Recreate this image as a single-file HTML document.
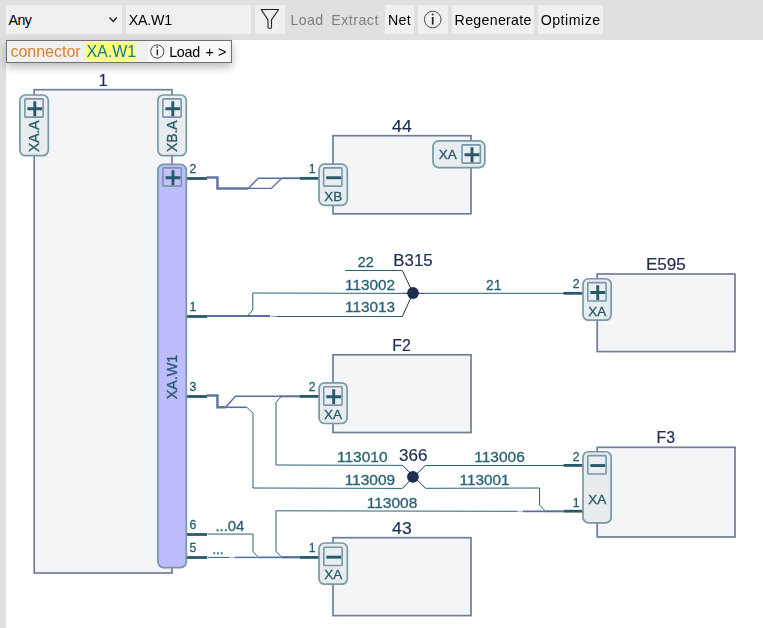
<!DOCTYPE html>
<html><head><meta charset="utf-8"><title>XA.W1</title>
<style>
html,body{margin:0;padding:0;}
body{width:763px;height:628px;overflow:hidden;background:#fff;font-family:"Liberation Sans",sans-serif;position:relative;}
#bar{position:absolute;left:0;top:0;width:763px;height:39.5px;background:#e0e0e0;}
#strip{position:absolute;left:0;top:0;width:5.8px;height:628px;background:#e0e0e0;}
.b{position:absolute;top:5px;height:29px;background:#f0f0f0;font-size:14.2px;line-height:30.4px;color:#000;white-space:nowrap;box-sizing:border-box;}
.d{background:transparent;color:#808080;}
#tip{position:absolute;left:6px;top:40px;width:226px;height:23px;box-sizing:border-box;border:1px solid #707070;background:#f0f0f0;box-shadow:0 4px 10px rgba(0,0,0,0.28);font-size:16px;line-height:21px;white-space:nowrap;}
#tip span{position:absolute;top:0;height:21px;}
svg{position:absolute;left:0;top:0;}
svg text{font-family:"Liberation Sans",sans-serif;}
</style></head><body>
<div id="bar"></div><div id="strip"></div>
<svg id="dg" width="763" height="628" viewBox="0 0 763 628" style="will-change:transform">
<rect x="34.2" y="89.7" width="137.80" height="483.30" fill="#f4f5f7" stroke="#707e96" stroke-width="1.7"/>
<text x="103.2" y="86" font-size="16.6" fill="#1e2d50" stroke="#1e2d50" stroke-width="0.2" text-anchor="middle">1</text>
<rect x="333" y="135.7" width="138.00" height="78.10" fill="#f4f5f7" stroke="#707e96" stroke-width="1.7"/>
<text x="401.9" y="131.9" font-size="16.6" fill="#1e2d50" stroke="#1e2d50" stroke-width="0.2" text-anchor="middle" textLength="19.6" lengthAdjust="spacingAndGlyphs">44</text>
<rect x="597.2" y="274" width="137.80" height="77.60" fill="#f4f5f7" stroke="#707e96" stroke-width="1.7"/>
<text x="665.9" y="270" font-size="16.6" fill="#1e2d50" stroke="#1e2d50" stroke-width="0.2" text-anchor="middle" textLength="40" lengthAdjust="spacingAndGlyphs">E595</text>
<rect x="333" y="354.8" width="138.00" height="77.70" fill="#f4f5f7" stroke="#707e96" stroke-width="1.7"/>
<text x="401.5" y="350.8" font-size="16.6" fill="#1e2d50" stroke="#1e2d50" stroke-width="0.2" text-anchor="middle" textLength="18.5" lengthAdjust="spacingAndGlyphs">F2</text>
<rect x="597.2" y="447.3" width="137.80" height="89.70" fill="#f4f5f7" stroke="#707e96" stroke-width="1.7"/>
<text x="665.8" y="443.3" font-size="16.6" fill="#1e2d50" stroke="#1e2d50" stroke-width="0.2" text-anchor="middle" textLength="18.5" lengthAdjust="spacingAndGlyphs">F3</text>
<rect x="333" y="537.7" width="138.00" height="77.90" fill="#f4f5f7" stroke="#707e96" stroke-width="1.7"/>
<text x="401.9" y="533.7" font-size="16.6" fill="#1e2d50" stroke="#1e2d50" stroke-width="0.2" text-anchor="middle" textLength="19.6" lengthAdjust="spacingAndGlyphs">43</text>
<path d="M206.5 177.5H217.45V188.4H248.3" stroke="#6177a6" stroke-width="2.5" fill="none" stroke-linejoin="miter"/>
<path d="M248.3 188.4L258.3 178.2H281.6" stroke="#586fa1" stroke-width="1.4" fill="none" stroke-linejoin="miter"/>
<path d="M248.3 188.4H271.4L281.6 178.2" stroke="#586fa1" stroke-width="1.4" fill="none" stroke-linejoin="miter"/>
<path d="M281.6 178.2H299.5" stroke="#586fa1" stroke-width="1.9" fill="none" stroke-linejoin="miter"/>
<path d="M206.7 316.05H270" stroke="#586fa1" stroke-width="2.1" fill="none" stroke-linejoin="miter"/>
<path d="M271 316.5H276.5" stroke="#7d90b8" stroke-width="0.8" fill="none" stroke-linejoin="miter"/>
<path d="M276.5 316.5H402.3" stroke="#2a6173" stroke-width="1" fill="none" stroke-linejoin="miter"/>
<path d="M247.6 316L252.8 310V293L402.3 293.4" stroke="#2a6173" stroke-width="1" fill="none" stroke-linejoin="miter"/>
<path d="M345.2 270.5H402.3" stroke="#2a6173" stroke-width="1" fill="none" stroke-linejoin="miter"/>
<path d="M425.4 293.3H564" stroke="#2a6173" stroke-width="1" fill="none" stroke-linejoin="miter"/>
<path d="M402.3 270.5L413 293L402.3 316.5M402.3 293.3H425.4" stroke="#1e2d50" stroke-width="1" fill="none" stroke-linejoin="miter"/>
<circle cx="413" cy="293" r="5.9" fill="#1e2d50"/>
<path d="M206.5 395.5H217.45V407.2H225.6" stroke="#6177a6" stroke-width="2.5" fill="none" stroke-linejoin="miter"/>
<path d="M225.6 407.2L235.4 396.2H280" stroke="#586fa1" stroke-width="1.4" fill="none" stroke-linejoin="miter"/>
<path d="M280 396.3H299.5" stroke="#586fa1" stroke-width="2" fill="none" stroke-linejoin="miter"/>
<path d="M225.6 407.3H246.8" stroke="#586fa1" stroke-width="1.6" fill="none" stroke-linejoin="miter"/>
<path d="M246.8 407.3L253 413.2V488L402.4 488.4" stroke="#2a6173" stroke-width="1" fill="none" stroke-linejoin="miter"/>
<path d="M281.2 396.4L276 402.4V465L402.4 465.4" stroke="#2a6173" stroke-width="1" fill="none" stroke-linejoin="miter"/>
<path d="M402.4 465.2L425.5 488.3M402.4 488.3L425.5 465.2" stroke="#1e2d50" stroke-width="1" fill="none" stroke-linejoin="miter"/>
<circle cx="412.9" cy="476.8" r="5.9" fill="#1e2d50"/>
<path d="M425.5 465.5H563.5" stroke="#2a6173" stroke-width="1" fill="none" stroke-linejoin="miter"/>
<path d="M425.5 488.3L539.6 488V505.2L545.2 510.8" stroke="#2a6173" stroke-width="1" fill="none" stroke-linejoin="miter"/>
<path d="M281.2 556.5L276 551.5V510.8L517.5 511.3" stroke="#2a6173" stroke-width="1" fill="none" stroke-linejoin="miter"/>
<path d="M522.7 511.35H545.2" stroke="#586fa1" stroke-width="1.7" fill="none" stroke-linejoin="miter"/>
<path d="M545.2 511.3H563.5" stroke="#586fa1" stroke-width="2.0" fill="none" stroke-linejoin="miter"/>
<path d="M517.5 511.3H522.7" stroke="#9aa9c6" stroke-width="0.8" fill="none" stroke-linejoin="miter"/>
<path d="M207.5 534.05H253V551.5L257.6 556.5" stroke="#2a6173" stroke-width="1" fill="none" stroke-linejoin="miter"/>
<path d="M207.5 557.4H229" stroke="#2a6173" stroke-width="1" fill="none" stroke-linejoin="miter"/>
<path d="M235 557.4H257.6" stroke="#586fa1" stroke-width="1.5" fill="none" stroke-linejoin="miter"/>
<path d="M257.6 557.35H281.2" stroke="#586fa1" stroke-width="1.7" fill="none" stroke-linejoin="miter"/>
<path d="M281.2 557.25H299.5" stroke="#586fa1" stroke-width="2.3" fill="none" stroke-linejoin="miter"/>
<path d="M229 557.4H235" stroke="#9aa9c6" stroke-width="0.8" fill="none" stroke-linejoin="miter"/>
<path d="M186.5 178.5H207" stroke="#265a6b" stroke-width="2.8" fill="none"/>
<path d="M186.5 316.5H207" stroke="#265a6b" stroke-width="2.8" fill="none"/>
<path d="M186.5 396.5H207" stroke="#265a6b" stroke-width="2.8" fill="none"/>
<path d="M186.5 534.5H207" stroke="#265a6b" stroke-width="2.8" fill="none"/>
<path d="M186.5 557.5H207" stroke="#265a6b" stroke-width="2.8" fill="none"/>
<path d="M299.5 178.35H318.8" stroke="#265a6b" stroke-width="2.8" fill="none"/>
<path d="M563.5 293.3H582.5" stroke="#265a6b" stroke-width="2.8" fill="none"/>
<path d="M299.5 396.4H318.8" stroke="#265a6b" stroke-width="2.8" fill="none"/>
<path d="M563.5 465.4H582.8" stroke="#265a6b" stroke-width="2.8" fill="none"/>
<path d="M563.5 511.2H582.8" stroke="#265a6b" stroke-width="2.8" fill="none"/>
<path d="M299.5 557.4H319" stroke="#265a6b" stroke-width="2.8" fill="none"/>
<rect x="19.9" y="95.0" width="28.40" height="60.70" rx="5.6" fill="#e8ecef" stroke="#7698a7" stroke-width="1.7"/>
<rect x="24.85" y="98.85" width="18.30" height="18.30" rx="0.8" fill="#ebeef1" stroke="#7698a7" stroke-width="1.6"/>
<path d="M27.40 108.75H42.20M34.80 101.35V116.15" stroke="#265a6b" stroke-width="2.9" fill="none"/>
<rect x="157.9" y="95.0" width="28.40" height="60.70" rx="5.6" fill="#e8ecef" stroke="#7698a7" stroke-width="1.7"/>
<rect x="162.85" y="98.85" width="18.30" height="18.30" rx="0.8" fill="#ebeef1" stroke="#7698a7" stroke-width="1.6"/>
<path d="M165.40 108.75H180.20M172.80 101.35V116.15" stroke="#265a6b" stroke-width="2.9" fill="none"/>
<rect x="157.9" y="164.4" width="28.40" height="403.20" rx="5.6" fill="#bcbcff" stroke="#7698a7" stroke-width="1.7"/>
<rect x="163.05" y="167.85" width="18.30" height="18.30" rx="0.8" fill="#c2c1fd" stroke="#7698a7" stroke-width="1.6"/>
<path d="M165.60 177.75H180.40M173.00 170.35V185.15" stroke="#265a6b" stroke-width="2.9" fill="none"/>
<rect x="319.0" y="164.1" width="28.30" height="41.20" rx="5.6" fill="#e8ecef" stroke="#7698a7" stroke-width="1.7"/>
<rect x="323.65" y="167.85" width="18.30" height="18.30" rx="0.8" fill="#ebeef1" stroke="#7698a7" stroke-width="1.6"/>
<path d="M326.20 177.75H341.00" stroke="#265a6b" stroke-width="2.9" fill="none"/>
<rect x="433.0" y="140.9" width="51.80" height="26.70" rx="5.6" fill="#e8ecef" stroke="#7698a7" stroke-width="1.7"/>
<rect x="462.05" y="144.85" width="18.30" height="18.30" rx="0.8" fill="#ebeef1" stroke="#7698a7" stroke-width="1.6"/>
<path d="M464.60 154.75H479.40M472.00 147.35V162.15" stroke="#265a6b" stroke-width="2.9" fill="none"/>
<rect x="582.95" y="278.75" width="28.20" height="41.45" rx="5.6" fill="#e8ecef" stroke="#7698a7" stroke-width="1.7"/>
<rect x="587.80" y="282.65" width="18.30" height="18.30" rx="0.8" fill="#ebeef1" stroke="#7698a7" stroke-width="1.6"/>
<path d="M590.35 292.55H605.15M597.75 285.15V299.95" stroke="#265a6b" stroke-width="2.9" fill="none"/>
<rect x="319.1" y="382.8" width="28.00" height="40.70" rx="5.6" fill="#e8ecef" stroke="#7698a7" stroke-width="1.7"/>
<rect x="323.75" y="386.80" width="18.30" height="18.30" rx="0.8" fill="#ebeef1" stroke="#7698a7" stroke-width="1.6"/>
<path d="M326.30 396.70H341.10M333.70 389.30V404.10" stroke="#265a6b" stroke-width="2.9" fill="none"/>
<rect x="582.95" y="451.75" width="28.20" height="71.05" rx="5.6" fill="#e8ecef" stroke="#7698a7" stroke-width="1.7"/>
<rect x="587.80" y="455.65" width="18.30" height="18.30" rx="0.8" fill="#ebeef1" stroke="#7698a7" stroke-width="1.6"/>
<path d="M590.35 465.55H605.15" stroke="#265a6b" stroke-width="2.9" fill="none"/>
<rect x="319.0" y="543.0" width="28.30" height="41.20" rx="5.6" fill="#e8ecef" stroke="#7698a7" stroke-width="1.7"/>
<rect x="323.85" y="547.25" width="18.30" height="18.30" rx="0.8" fill="#ebeef1" stroke="#7698a7" stroke-width="1.6"/>
<path d="M326.40 557.15H341.20" stroke="#265a6b" stroke-width="2.9" fill="none"/>
<text transform="translate(39 136.2) rotate(-90)" font-size="14.9" fill="#265a6b" stroke="#265a6b" stroke-width="0.3" text-anchor="middle" textLength="31.6" lengthAdjust="spacingAndGlyphs">XA.A</text>
<text transform="translate(177 136.2) rotate(-90)" font-size="14.9" fill="#265a6b" stroke="#265a6b" stroke-width="0.3" text-anchor="middle" textLength="31.6" lengthAdjust="spacingAndGlyphs">XB.A</text>
<text transform="translate(177.3 377) rotate(-90)" font-size="14.9" fill="#265a6b" stroke="#265a6b" stroke-width="0.3" text-anchor="middle" textLength="44.6" lengthAdjust="spacingAndGlyphs">XA.W1</text>
<text x="333.2" y="200.8" font-size="13.6" fill="#265a6b" stroke="#265a6b" stroke-width="0.3" text-anchor="middle" textLength="18" lengthAdjust="spacingAndGlyphs">XB</text>
<text x="447.7" y="158.6" font-size="13.6" fill="#265a6b" stroke="#265a6b" stroke-width="0.3" text-anchor="middle" textLength="18" lengthAdjust="spacingAndGlyphs">XA</text>
<text x="597.2" y="315.6" font-size="13.6" fill="#265a6b" stroke="#265a6b" stroke-width="0.3" text-anchor="middle" textLength="18" lengthAdjust="spacingAndGlyphs">XA</text>
<text x="333.1" y="419.2" font-size="13.6" fill="#265a6b" stroke="#265a6b" stroke-width="0.3" text-anchor="middle" textLength="18" lengthAdjust="spacingAndGlyphs">XA</text>
<text x="597.2" y="503.8" font-size="13.6" fill="#265a6b" stroke="#265a6b" stroke-width="0.3" text-anchor="middle" textLength="18" lengthAdjust="spacingAndGlyphs">XA</text>
<text x="333.2" y="579.4" font-size="13.6" fill="#265a6b" stroke="#265a6b" stroke-width="0.3" text-anchor="middle" textLength="18" lengthAdjust="spacingAndGlyphs">XA</text>
<text x="189.4" y="172.8" font-size="12.2" fill="#265a6b" stroke="#265a6b" stroke-width="0.3" text-anchor="start">2</text>
<text x="189.4" y="310.8" font-size="12.2" fill="#265a6b" stroke="#265a6b" stroke-width="0.3" text-anchor="start">1</text>
<text x="189.4" y="390.8" font-size="12.2" fill="#265a6b" stroke="#265a6b" stroke-width="0.3" text-anchor="start">3</text>
<text x="189.4" y="528.8" font-size="12.2" fill="#265a6b" stroke="#265a6b" stroke-width="0.3" text-anchor="start">6</text>
<text x="189.4" y="551.8" font-size="12.2" fill="#265a6b" stroke="#265a6b" stroke-width="0.3" text-anchor="start">5</text>
<text x="315.5" y="172.6" font-size="12.2" fill="#265a6b" stroke="#265a6b" stroke-width="0.3" text-anchor="end">1</text>
<text x="579.6" y="287.7" font-size="12.2" fill="#265a6b" stroke="#265a6b" stroke-width="0.3" text-anchor="end">2</text>
<text x="315.6" y="391.4" font-size="12.2" fill="#265a6b" stroke="#265a6b" stroke-width="0.3" text-anchor="end">2</text>
<text x="579.6" y="460.9" font-size="12.2" fill="#265a6b" stroke="#265a6b" stroke-width="0.3" text-anchor="end">2</text>
<text x="579.6" y="506.7" font-size="12.2" fill="#265a6b" stroke="#265a6b" stroke-width="0.3" text-anchor="end">1</text>
<text x="315.5" y="551.8" font-size="12.2" fill="#265a6b" stroke="#265a6b" stroke-width="0.3" text-anchor="end">1</text>
<text x="365.8" y="266.7" font-size="14" fill="#2a6173" stroke="#2a6173" stroke-width="0.3" text-anchor="middle" textLength="16" lengthAdjust="spacingAndGlyphs">22</text>
<text x="370" y="289.6" font-size="14" fill="#2a6173" stroke="#2a6173" stroke-width="0.3" text-anchor="middle" textLength="50" lengthAdjust="spacingAndGlyphs">113002</text>
<text x="370" y="312.4" font-size="14" fill="#2a6173" stroke="#2a6173" stroke-width="0.3" text-anchor="middle" textLength="50" lengthAdjust="spacingAndGlyphs">113013</text>
<text x="493.8" y="289.6" font-size="14" fill="#2a6173" stroke="#2a6173" stroke-width="0.3" text-anchor="middle" textLength="15.5" lengthAdjust="spacingAndGlyphs">21</text>
<text x="362.3" y="461.5" font-size="14" fill="#2a6173" stroke="#2a6173" stroke-width="0.3" text-anchor="middle" textLength="50.5" lengthAdjust="spacingAndGlyphs">113010</text>
<text x="369.9" y="484.5" font-size="14" fill="#2a6173" stroke="#2a6173" stroke-width="0.3" text-anchor="middle" textLength="50.5" lengthAdjust="spacingAndGlyphs">113009</text>
<text x="392" y="507.6" font-size="14" fill="#2a6173" stroke="#2a6173" stroke-width="0.3" text-anchor="middle" textLength="50.5" lengthAdjust="spacingAndGlyphs">113008</text>
<text x="499.5" y="461.5" font-size="14" fill="#2a6173" stroke="#2a6173" stroke-width="0.3" text-anchor="middle" textLength="50.5" lengthAdjust="spacingAndGlyphs">113006</text>
<text x="484.5" y="484.5" font-size="14" fill="#2a6173" stroke="#2a6173" stroke-width="0.3" text-anchor="middle" textLength="50" lengthAdjust="spacingAndGlyphs">113001</text>
<text x="215.4" y="530.9" font-size="14" fill="#2a6173" stroke="#2a6173" stroke-width="0.3" text-anchor="start" textLength="29" lengthAdjust="spacingAndGlyphs">...04</text>
<text x="212.4" y="553.6" font-size="14" fill="#2a6173" stroke="#2a6173" stroke-width="0.3" text-anchor="start" textLength="11.2" lengthAdjust="spacingAndGlyphs">...</text>
<text x="413" y="265.7" font-size="16.6" fill="#1e2d50" stroke="#1e2d50" stroke-width="0.2" text-anchor="middle" textLength="39.3" lengthAdjust="spacingAndGlyphs">B315</text>
<text x="413.2" y="460.7" font-size="16.6" fill="#1e2d50" stroke="#1e2d50" stroke-width="0.2" text-anchor="middle" textLength="28.4" lengthAdjust="spacingAndGlyphs">366</text>
</svg>
<div class="b" style="left:6px;width:116px;padding-left:2.5px;letter-spacing:-0.5px;">Any</div>
<div class="b" style="left:126px;width:125px;padding-left:2.7px;letter-spacing:-0.2px;">XA.W1</div>
<div class="b" style="left:255px;width:30px;"></div>
<div class="b d" style="left:290.6px;letter-spacing:0.35px;">Load</div>
<div class="b d" style="left:331.2px;letter-spacing:0.5px;">Extract</div>
<div class="b" style="left:385px;width:29px;padding-left:3px;letter-spacing:0.3px;">Net</div>
<div class="b" style="left:418px;width:30px;"></div>
<div class="b" style="left:452px;width:82px;padding-left:2.6px;letter-spacing:0.3px;">Regenerate</div>
<div class="b" style="left:538px;width:65px;padding-left:2.7px;letter-spacing:0.5px;">Optimize</div>
<svg width="763" height="40" viewBox="0 0 763 40"><path d="M109.6 17.6L113.2 21.4L116.8 17.6" stroke="#222" stroke-width="1.5" fill="none"/>
<path d="M261.2 9.5H278.6L271.5 19.9V27.3Q271.5 28.3 270.5 28.3H269Q268 28.3 268 27.3V19.9Z" stroke="#222" stroke-width="1.1" fill="none" stroke-linejoin="round"/>
<circle cx="432.7" cy="19.5" r="8.3" stroke="#3a3a3a" stroke-width="0.9" fill="none"/>
<path d="M432.7 17V24.6" stroke="#222" stroke-width="1.7"/><circle cx="432.7" cy="14.5" r="0.95" fill="#222"/>
</svg>
<div id="tip"><span style="left:3.4px;top:0;color:#d9822b;">connector</span><span style="left:79.2px;width:49.6px;background:#ffff78;top:1px;height:19px;"></span><span style="left:79.4px;top:0;color:#0c789f;">XA.W1</span>
<span style="left:141px;width:81px;background:#f8f8f8;top:0;height:21px;"></span>
<span style="left:162.2px;top:0.6px;color:#000;font-size:14.3px;letter-spacing:-0.3px;">Load</span><span style="left:198.4px;top:0.6px;color:#000;font-size:14.3px;">+</span><span style="left:210.9px;top:0.6px;color:#000;font-size:14.3px;">&gt;</span></div>
<svg width="763" height="70" viewBox="0 0 763 70"><circle cx="157.3" cy="51.5" r="6.6" stroke="#333" stroke-width="0.9" fill="none"/><path d="M157.3 49.4V55.2" stroke="#222" stroke-width="1.4"/><circle cx="157.3" cy="47" r="0.85" fill="#222"/></svg>
</body></html>
